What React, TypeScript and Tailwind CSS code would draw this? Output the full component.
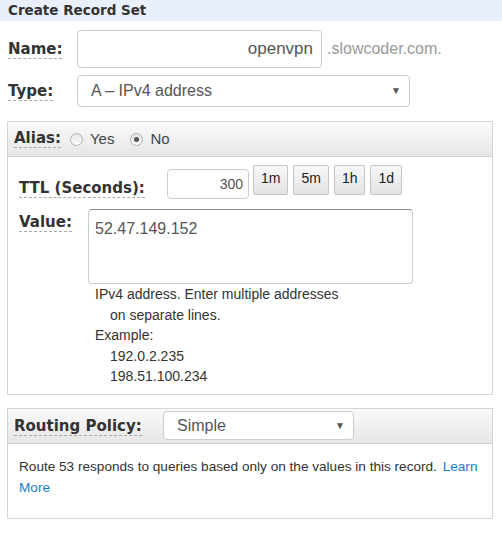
const labelCls =
  "font-['DejaVu_Sans',Verdana,sans-serif] font-bold text-[#333] border-b border-dashed border-[#aaa] leading-[17px]";

function Radio({ checked }: { checked?: boolean }) {
  return (
    <span className="inline-flex h-[13px] w-[13px] items-center justify-center rounded-full border border-[#b0b0b0] bg-gradient-to-b from-[#e4e4e4] to-[#fcfcfc]">
      {checked && <span className="h-[5px] w-[5px] rounded-full bg-[#555]" />}
    </span>
  );
}

function Arrow() {
  return <span className="text-[10px] leading-none text-[#555]">▼</span>;
}

const ttlButtons = ["1m", "5m", "1h", "1d"];

export default function App() {
  return (
    <div className="h-[541px] w-[502px] bg-white font-['Liberation_Sans',Arial,sans-serif] text-[#333]">
      <div className="flex h-[21px] items-center bg-[#e9f0fb] pl-[8px]">
        <span className="font-['DejaVu_Sans',Verdana,sans-serif] text-[13.5px] font-bold text-[#333]">
          Create Record Set
        </span>
      </div>

      {/* name */}
      <div className="mt-[9px] flex items-center pl-[8px]">
        <div className="w-[69px]">
          <span className={`${labelCls} text-[15px]`}>Name:</span>
        </div>
        <div className="flex h-[38px] w-[245px] items-center justify-end rounded-[4px] border border-[#ccc] pr-[8px] text-[17px] text-[#555]">
          openvpn
        </div>
        <span className="ml-[5px] text-[16px] text-[#999]">.slowcoder.com.</span>
      </div>

      {/* type */}
      <div className="mt-[7px] flex items-center pl-[8px]">
        <div className="w-[69px]">
          <span className={`${labelCls} text-[15px]`}>Type:</span>
        </div>
        <div className="flex h-[32px] w-[333px] items-center justify-between rounded-[4px] border border-[#ccc] pl-[13px] pr-[8px] text-[16px] text-[#555]">
          <span>A – IPv4 address</span>
          <Arrow />
        </div>
      </div>

      {/* alias panel */}
      <div className="mx-[7px] mt-[14px] w-[486px] border border-[#d5d5d5]">
        <div className="flex h-[35px] items-center border-b border-[#d0d0d0] bg-gradient-to-b from-[#fafafa] to-[#e6e6e6] pl-[6px]">
          <span className={`${labelCls} text-[15px]`}>Alias:</span>
          <label className="ml-[9px] flex items-center gap-[7px] text-[15px] text-[#444]">
            <Radio /> Yes
          </label>
          <label className="ml-[16px] flex items-center gap-[7px] text-[15px] text-[#444]">
            <Radio checked /> No
          </label>
        </div>

        <div className="px-[11px] pb-[7px] pt-[8px]">
          <div className="flex items-start">
            <div className="w-[148px] pt-[11px]">
              <span className={`${labelCls} text-[15px]`}>TTL (Seconds):</span>
            </div>
            <div className="mt-[4px] flex h-[30px] w-[82px] items-center justify-end rounded-[4px] border border-[#ccc] pr-[5px] text-[14px] text-[#555]">
              300
            </div>
            <div className="ml-[4px] flex gap-[5px]">
              {ttlButtons.map((b) => (
                <button
                  key={b}
                  className="h-[30px] rounded-[2px] border border-[#c6c6c6] bg-gradient-to-b from-[#f7f7f7] to-[#e4e4e4] px-[7px] pb-[4px] text-[14px] text-[#222]"
                >
                  {b}
                </button>
              ))}
            </div>
          </div>

          <div className="mt-[9px] flex">
            <div className="w-[69px] pt-[1px]">
              <span className={`${labelCls} text-[15px]`}>Value:</span>
            </div>
            <div className="flex flex-col">
              <div className="h-[75px] w-[325px] rounded-[4px] border border-[#ccc] border-t-[#888] px-[6px] pt-[7px] text-[16px] text-[#555]">
                52.47.149.152
              </div>
              <div className="pl-[7px] text-[14px] leading-[20.5px] text-[#333]">
                <div>IPv4 address. Enter multiple addresses</div>
                <div className="pl-[15px]">on separate lines.</div>
                <div>Example:</div>
                <div className="pl-[15px]">192.0.2.235</div>
                <div className="pl-[15px]">198.51.100.234</div>
              </div>
            </div>
          </div>
        </div>
      </div>

      {/* routing panel */}
      <div className="mx-[7px] mt-[13px] w-[486px] border border-[#d5d5d5]">
        <div className="flex h-[35px] items-center border-b border-[#d0d0d0] bg-gradient-to-b from-[#fafafa] to-[#e6e6e6] pl-[6px]">
          <div className="w-[149px]">
            <span className={`${labelCls} text-[15px]`}>Routing Policy:</span>
          </div>
          <div className="flex h-[29px] w-[191px] items-center justify-between rounded-[4px] border border-[#ccc] bg-white pl-[13px] pr-[8px] text-[16px] text-[#555]">
            <span>Simple</span>
            <Arrow />
          </div>
        </div>
        <div className="pb-[20px] pl-[11px] pr-[4px] pt-[12px] text-[13.6px] leading-[21px] text-[#333]">
          Route 53 responds to queries based only on the values in this record.{" "}
          <a className="ml-[2px] text-[#1a7bd0]">Learn More</a>
        </div>
      </div>
    </div>
  );
}
